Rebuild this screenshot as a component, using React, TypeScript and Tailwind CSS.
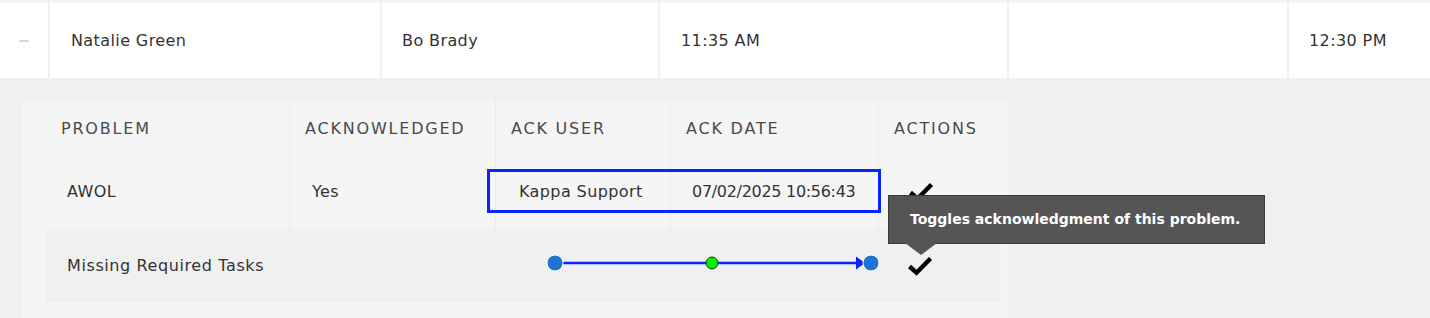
import { Minus } from "lucide-react";

const font = "font-['DejaVu_Sans','Liberation_Sans',sans-serif]";

function Check() {
  return (
    <svg width="26" height="22" viewBox="0 0 26 22" className="block">
      <path d="M2.5 11.5l7 6.2L23.5 3.5" fill="none" stroke="#000" strokeWidth="4.4" strokeLinecap="butt" strokeLinejoin="miter" />
    </svg>
  );
}

const headers = ["PROBLEM", "ACKNOWLEDGED", "ACK USER", "ACK DATE", "ACTIONS"];

export default function App() {
  return (
    <div className={`relative w-[1430px] h-[318px] overflow-hidden bg-[#f0f0f0] text-[#333] ${font}`}>
      {/* previous row edge */}
      <div className="grid grid-cols-[48px_332px_278px_349px_280px_1fr] h-[3px] bg-[#f4f4f4]">
        <div />
        <div className="border-l-2 border-[#ececec]" />
        <div className="border-l-2 border-[#ececec]" />
        <div className="border-l-2 border-[#ececec]" />
        <div className="border-l-2 border-[#ececec]" />
        <div className="border-l-2 border-[#ececec]" />
      </div>

      {/* expanded row */}
      <div className="grid grid-cols-[48px_332px_278px_349px_280px_1fr] h-[75px] bg-white text-[16px] tracking-[0.4px]">
        <div className="flex items-center justify-center text-[#aaa] pt-[1px]">
          <Minus size={14} strokeWidth={2} />
        </div>
        <div className="flex items-center pl-[21px] border-l-2 border-[#f0f0f0]">Natalie Green</div>
        <div className="flex items-center pl-[20px] border-l-2 border-[#f0f0f0]">Bo Brady</div>
        <div className="flex items-center pl-[21px] border-l-2 border-[#f0f0f0]">11:35 AM</div>
        <div className="border-l-2 border-[#f0f0f0]" />
        <div className="flex items-center pl-[20px] border-l-2 border-[#f0f0f0]">12:30 PM</div>
      </div>

      {/* detail panel */}
      <div className="pl-[23px] pt-[22px]">
        <div className="w-[985px] h-[240px] bg-[#f5f5f5] pl-[23px]">
          <div className="w-[954px] grid grid-cols-[243px_206px_175px_208px_122px] text-[16px] tracking-[0.4px]">
            {headers.map((h, i) => (
              <div
                key={h}
                className={`h-[55px] flex items-center pl-[15px] pt-[2px] text-[16px] tracking-[1.8px] text-[#4a4a4a] ${i > 0 ? "border-l border-[#ebebeb]" : ""}`}
              >
                {h}
              </div>
            ))}

            <div className="h-[74px] flex items-center pl-[21px]">AWOL</div>
            <div className="h-[74px] flex items-center pl-[22px] border-l border-[#ebebeb]">Yes</div>
            <div className="h-[74px] flex items-center pl-[23px] border-l border-[#ebebeb]">Kappa Support</div>
            <div className="h-[74px] flex items-center pl-[21px] border-l border-[#ebebeb] tracking-[-0.3px]">07/02/2025 10:56:43</div>
            <div className="h-[74px] flex items-center pl-[29px] border-l border-[#ebebeb]">
              <Check />
            </div>

            <div className="col-span-4 h-[73px] flex items-center pl-[21px] bg-[#f0f0f0] tracking-[0.6px]">
              Missing Required Tasks
            </div>
            <div className="h-[73px] flex items-center pl-[29px] bg-[#f0f0f0]">
              <Check />
            </div>
          </div>
        </div>
      </div>

      {/* annotation box */}
      <div className="absolute left-[487px] top-[169px] w-[394px] h-[44px] border-[3px] border-[#0a24ff]" />

      {/* annotation arrow */}
      <svg className="absolute left-[540px] top-[250px]" width="345" height="26" viewBox="0 0 345 26">
        <line x1="15" y1="13" x2="320" y2="13" stroke="#0a24ff" strokeWidth="2.5" />
        <path d="M316 6.5L325 13L316 19.5Z" fill="#0a24ff" />
        <circle cx="15" cy="13" r="8" fill="#1e74d0" stroke="#fff" strokeWidth="1" />
        <circle cx="172" cy="13" r="6" fill="#00f000" stroke="#1a3a1a" strokeWidth="1" />
        <circle cx="331" cy="13" r="8" fill="#1e74d0" stroke="#fff" strokeWidth="1" />
      </svg>

      {/* tooltip */}
      <div className="absolute left-[888px] top-[195px]">
        <div className="w-[377px] h-[49px] bg-[#555] border border-[#3a3a3a] flex items-center pl-[21px] text-white text-[14px] font-bold">
          Toggles acknowledgment of this problem.
        </div>
        <svg className="absolute left-[17px] top-[48px]" width="32" height="13" viewBox="0 0 32 13">
          <path d="M0 0L32 0L16 12Z" fill="#555" />
        </svg>
      </div>
    </div>
  );
}
